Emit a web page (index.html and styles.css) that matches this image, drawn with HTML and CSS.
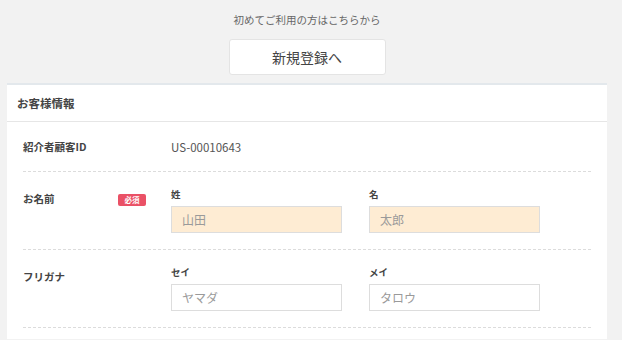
FILE: index.html
```html
<!DOCTYPE html>
<html lang="ja">
<head>
    <meta charset="UTF-8">
    <meta name="viewport" content="width=device-width, initial-scale=1.0">
    <title>お客様情報</title>
    <link rel="stylesheet" href="styles.css">
</head>
<body>
    <div class="page">
        <div class="intro">
            <p class="intro-text">初めてご利用の方はこちらから</p>
            <a class="signup" href="#">新規登録へ</a>
        </div>
        <div class="card">
            <div class="card-head">お客様情報</div>
            <div class="card-body">
                <div class="row row-id">
                    <div class="label">紹介者顧客ID</div>
                    <div class="value">US-00010643</div>
                </div>
                <div class="row">
                    <div class="label">お名前<span class="badge">必須</span></div>
                    <div class="fields">
                        <div class="field">
                            <div class="field-label">姓</div>
                            <input class="input filled" type="text" placeholder="山田">
                        </div>
                        <div class="field">
                            <div class="field-label">名</div>
                            <input class="input filled" type="text" placeholder="太郎">
                        </div>
                    </div>
                </div>
                <div class="row">
                    <div class="label">フリガナ</div>
                    <div class="fields">
                        <div class="field">
                            <div class="field-label">セイ</div>
                            <input class="input" type="text" placeholder="ヤマダ">
                        </div>
                        <div class="field">
                            <div class="field-label">メイ</div>
                            <input class="input" type="text" placeholder="タロウ">
                        </div>
                    </div>
                </div>
            </div>
        </div>
    </div>
</body>
</html>
```

FILE: styles.css
```css
body {
    margin: 0;
    background-color: #f2f2f2;
    font-family: "Noto Sans CJK JP", "Noto Sans", sans-serif;
    color: #444;
}
.page {
    width: 614px;
}
.intro {
    display: flex;
    flex-direction: column;
    align-items: center;
    padding-top: 12px;
}
.intro-text {
    margin: 0;
    font-size: 10.5px;
    line-height: 16px;
    color: #666;
}
.signup {
    display: flex;
    align-items: center;
    justify-content: center;
    box-sizing: border-box;
    width: 157px;
    height: 36px;
    margin-top: 11px;
    background: #fff;
    border: 1px solid #e4e4e4;
    border-radius: 3px;
    font-size: 14px;
    color: #444;
    text-decoration: none;
}
.card {
    width: 600px;
    margin: 8px 0 0 7px;
    background: #fff;
    border-top: 2px solid #e3e8ec;
}
.card-head {
    height: 36px;
    line-height: 36px;
    padding-left: 10px;
    font-size: 11.5px;
    font-weight: bold;
    color: #444;
    border-bottom: 1px solid #e6e6e6;
}
.card-body {
    padding: 0 16px 11px;
}
.row {
    display: grid;
    grid-template-columns: 148px 1fr;
    align-items: start;
    padding: 15px 0 16px;
    border-bottom: 1px dashed #dcdcdc;
}
.row-id {
    align-items: center;
    padding: 18px 0 17px;
}
.label {
    display: flex;
    align-items: center;
    padding-right: 25px;
    margin-top: 5px;
    font-size: 10.5px;
    line-height: 14px;
    font-weight: bold;
    color: #444;
}
.row-id .label {
    margin-top: 0;
}
.value {
    font-size: 11.5px;
    line-height: 14px;
    color: #555;
}
.badge {
    margin-left: auto;
    margin-top: 2px;
    width: 28px;
    height: 12px;
    line-height: 12px;
    text-align: center;
    background: #ea5166;
    color: #fff;
    border-radius: 2px;
    font-size: 7.5px;
    font-weight: bold;
}
.fields {
    display: flex;
    gap: 28px;
}
.field {
    width: 170px;
}
.field-label {
    font-size: 9.5px;
    line-height: 14px;
    font-weight: bold;
    color: #444;
    margin-bottom: 5px;
}
.input {
    display: block;
    box-sizing: border-box;
    width: 171px;
    height: 27px;
    margin: 0;
    padding: 0 10px;
    border: 1px solid #ddd;
    border-radius: 0;
    background: #fff;
    font-family: inherit;
    font-size: 12px;
    color: #444;
    outline: none;
}
.input::placeholder {
    color: #9a9a9a;
}
.input.filled {
    background: #feecd3;
}
```
